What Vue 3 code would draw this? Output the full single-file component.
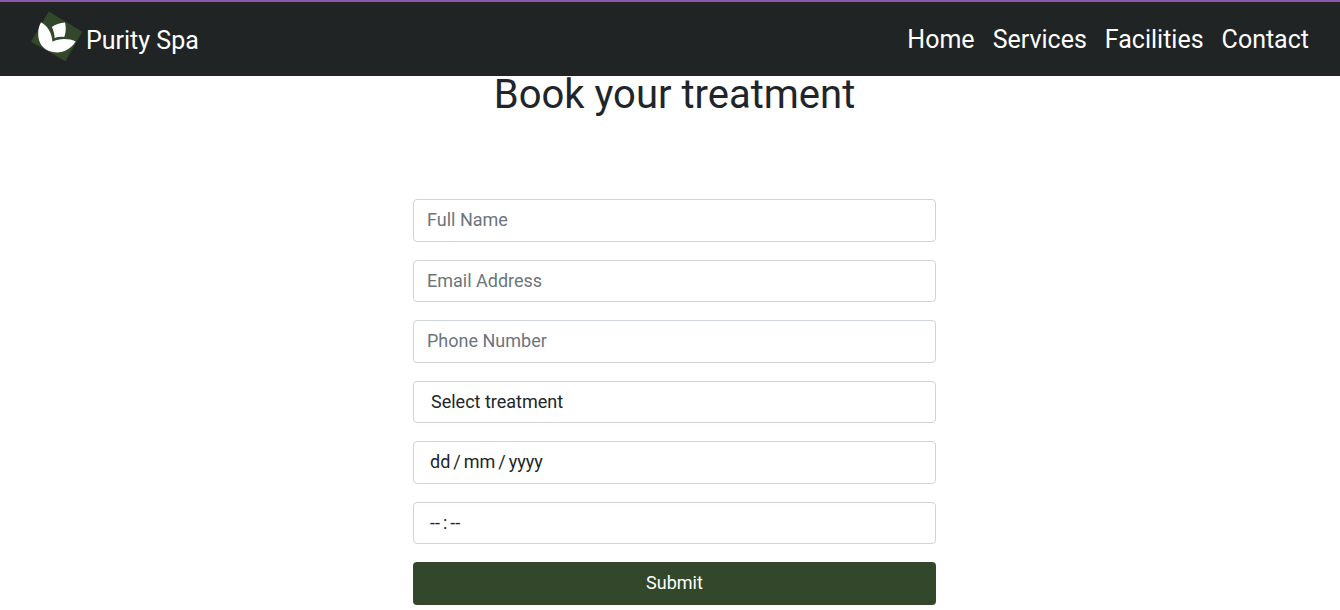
<script setup>
const links = ['Home', 'Services', 'Facilities', 'Contact']
</script>

<template>
  <div class="page">
    <header class="navbar">
      <a class="brand">
        <svg class="logo" width="52" height="52" viewBox="0 0 52 52" aria-hidden="true">
          <path d="M17.7 1.5 51.3 21.7 34.3 51.3 0 31.7Z" fill="#33472b" />
          <path d="M10 12.3C16.5 16 20.8 22.5 21.5 31.8C27.5 28.6 37 28 44.7 31.4C39.5 39 33 42.4 26 42.4C14.5 42.4 7.2 35 7.2 24C7.2 19.5 8 15.7 10 12.3Z" fill="#fff" />
          <path d="M34 12.5C35.2 17 35 22.5 33.3 27.1C29.8 26.6 26.6 26.9 23.6 28.1C23.6 24.4 22.6 20.6 20.9 17.1C24 14.5 29 12.7 34 12.5Z" fill="#fff" />
        </svg>
        <span>Purity Spa</span>
      </a>
      <nav class="links">
        <a v-for="link in links" :key="link">{{ link }}</a>
      </nav>
    </header>
    <main>
      <h1>Book your treatment</h1>
      <form class="form" @submit.prevent>
        <input class="control" type="text" placeholder="Full Name" />
        <input class="control" type="email" placeholder="Email Address" />
        <input class="control" type="tel" placeholder="Phone Number" />
        <select class="control select"><option>Select treatment</option></select>
        <div class="control date"><span>dd</span><i>/</i><span>mm</span><i>/</i><span>yyyy</span></div>
        <div class="control time"><span>--</span><i>:</i><span>--</span></div>
        <button class="submit" type="submit">Submit</button>
      </form>
    </main>
  </div>
</template>

<style>
body { margin: 0; background: #fff; overflow: hidden; }
</style>

<style scoped>
.page { height: 610px; overflow: hidden; font-family: Roboto, sans-serif; color: #212529; }
.navbar {
  box-sizing: border-box;
  height: 76px;
  padding: 0 31px;
  border-top: 2px solid #8b5aa5;
  background: #212425;
  display: flex;
  align-items: center;
  justify-content: space-between;
  color: #fff;
}
.brand { display: flex; align-items: center; gap: 3px; font-size: 25px; line-height: 30px; }
.logo { display: block; margin-top: -7px; }
.brand span { padding-top: 4px; }
.links { display: flex; gap: 18px; font-size: 25px; line-height: 30px; padding-top: 2px; }
h1 { margin: 0; padding-left: 9px; text-align: center; font-size: 40px; line-height: 38px; height: 123px; box-sizing: border-box; font-weight: 400; }
.form { width: 523px; margin-left: 413px; display: flex; flex-direction: column; gap: 18px; }
.control {
  box-sizing: border-box;
  width: 100%;
  height: 42.5px;
  margin: 0;
  padding: 0 13px 1px;
  border: 1px solid #ced4da;
  border-radius: 4px;
  background: #fff;
  font: 400 18px/27px Roboto, sans-serif;
  color: #212529;
  outline: none;
}
.control::placeholder { color: #6c757d; opacity: 1; }
.select { appearance: none; padding-left: 17px; }
.date, .time { display: flex; align-items: center; padding-left: 16px; }
.control i { font-style: normal; padding: 0 3px; }
.submit {
  height: 42.5px;
  margin: 0;
  padding: 0 0 1px;
  border: 0;
  border-radius: 4px;
  background: #33472b;
  color: #fff;
  font: 400 18px/27px Roboto, sans-serif;
}
</style>
